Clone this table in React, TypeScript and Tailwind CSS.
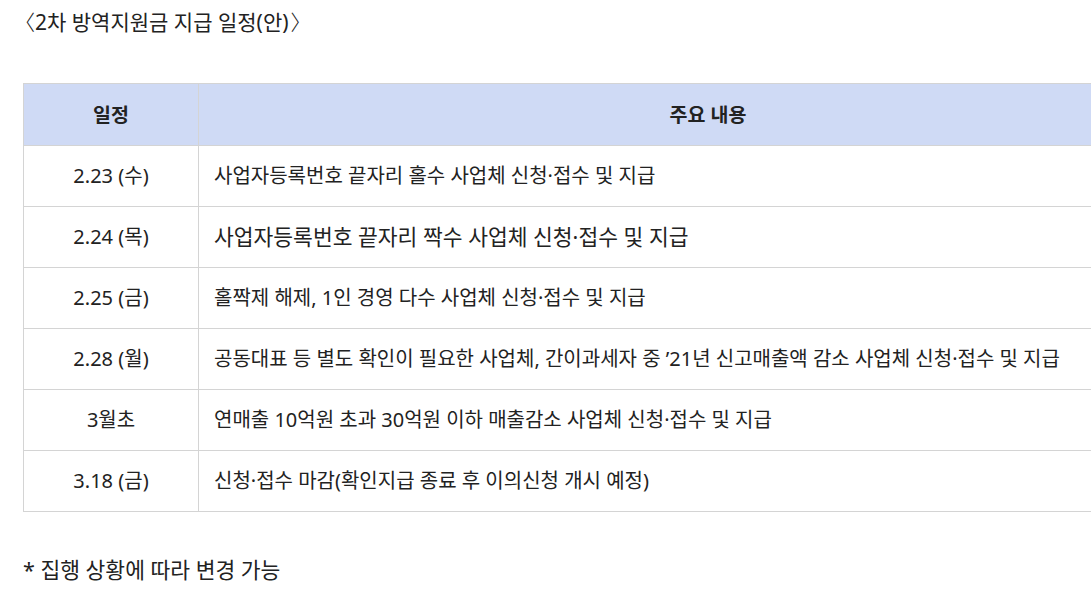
import React from 'react';

const rows = [
  { date: '2.23 (수)', text: '사업자등록번호 끝자리 홀수 사업체 신청·접수 및 지급', big: false },
  { date: '2.24 (목)', text: '사업자등록번호 끝자리 짝수 사업체 신청·접수 및 지급', big: true },
  { date: '2.25 (금)', text: '홀짝제 해제, 1인 경영 다수 사업체 신청·접수 및 지급', big: false },
  { date: '2.28 (월)', text: '공동대표 등 별도 확인이 필요한 사업체, 간이과세자 중 ’21년 신고매출액 감소 사업체 신청·접수 및 지급', big: false },
  { date: '3월초', text: '연매출 10억원 초과 30억원 이하 매출감소 사업체 신청·접수 및 지급', big: false },
  { date: '3.18 (금)', text: '신청·접수 마감(확인지급 종료 후 이의신청 개시 예정)', big: false },
];

const App: React.FC = () => {
  return (
    <div
      className="w-[1091px] h-[597px] overflow-hidden bg-white text-[#222]"
      style={{ fontFamily: '"Noto Sans", "Noto Sans CJK KR", sans-serif' }}
    >
      <div className="pl-[23px] pt-[6px]">
        <p className="text-[21px] leading-[30px]">
          <span style={{ fontFamily: '"Noto Sans CJK KR", sans-serif' }} className="font-light ml-[-9px]">〈</span>
          2차 방역지원금 지급 일정(안)
          <span style={{ fontFamily: '"Noto Sans CJK KR", sans-serif' }} className="font-light ml-[2px]">〉</span>
        </p>

        <table className="mt-[46px] w-[1195px] border-collapse text-[20px]">
          <thead>
            <tr className="bg-[#cfdaf5] h-[62px]">
              <th className="w-[175px] border border-[#d4d4d4] font-bold text-[19.5px]">일정</th>
              <th className="border border-[#d4d4d4] font-bold text-[19.5px]">주요 내용</th>
            </tr>
          </thead>
          <tbody>
            {rows.map((r, i) => (
              <tr key={i} className="h-[61px]">
                <td className="border border-[#d4d4d4] text-center">{r.date}</td>
                <td className={`border border-[#d4d4d4] pl-[15px] ${r.big ? 'text-[21.5px]' : ''}`}>{r.text}</td>
              </tr>
            ))}
          </tbody>
        </table>

        <p className="mt-[42px] text-[21.5px]">* 집행 상황에 따라 변경 가능</p>
      </div>
    </div>
  );
};

export default App;
